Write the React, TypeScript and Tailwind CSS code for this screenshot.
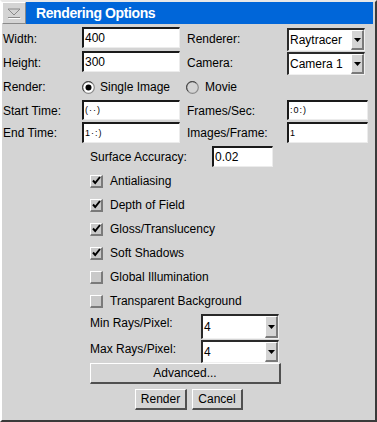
const font = { fontFamily: '"Liberation Sans", Arial, sans-serif' };

const Label = ({ children, className = "" }: { children: React.ReactNode; className?: string }) => (
  <span className={`text-[12px] leading-none text-black whitespace-nowrap ${className}`}>{children}</span>
);

const Field = ({ value, className = "", small = false }: { value: string; className?: string; small?: boolean }) => (
  <div
    className={`flex items-center bg-white border-t-2 border-l-2 border-t-[#1a1a1a] border-l-[#1a1a1a] border-b border-r border-b-[#ececec] border-r-[#ececec] pl-[1px] ${className}`}
  >
    <span className={small ? "text-[9px] leading-none tracking-[1px] text-black" : "text-[12px] leading-none text-black"}>
      {value}
    </span>
  </div>
);

const Arrow = () => (
  <svg width="7" height="4" viewBox="0 0 7 4">
    <path d="M0 0h7L3.5 4z" fill="#000" />
  </svg>
);

const Select = ({ value, className = "" }: { value: string; className?: string }) => (
  <div
    className={`flex bg-white border-t-2 border-l-2 border-t-[#2a2a2a] border-l-[#2a2a2a] border-b border-r border-b-[#f0f0f0] border-r-[#f0f0f0] ${className}`}
  >
    <div className="flex-1 flex items-center pl-[1px]">
      <span className="text-[12px] leading-none text-black">{value}</span>
    </div>
    <div className="w-[13px] flex items-center justify-center bg-[#d4d4d4] border-t border-l border-t-white border-l-white border-b-2 border-r-2 border-b-[#7a7a7a] border-r-[#7a7a7a]">
      <Arrow />
    </div>
  </div>
);

const Radio = ({ checked }: { checked?: boolean }) => (
  <svg width="13" height="13" viewBox="0 0 13 13">
    <circle cx="6.5" cy="6.5" r="5.8" fill={checked ? "#ffffff" : "#d4d4d4"} stroke="#8a8a8a" strokeWidth="1.2" />
    <path d="M2.2 10.3A5.6 5.6 0 0 1 10.3 2.2" fill="none" stroke="#404040" strokeWidth="1" />
    {checked && <circle cx="6.5" cy="6.5" r="3" fill="#000" />}
  </svg>
);

const Check = ({ checked, label }: { checked?: boolean; label: string }) => (
  <div className="h-[24px] flex items-center pl-[88px]">
    <div className="w-[13px] h-[13px] flex items-center justify-center bg-[#c9c9c9] border-t border-l border-t-white border-l-white border-b-2 border-r-2 border-b-[#7a7a7a] border-r-[#7a7a7a]">
      {checked && (
        <svg width="9" height="9" viewBox="0 0 9 9">
          <path d="M1 4.5l2.2 2.5L8 1" fill="none" stroke="#000" strokeWidth="2" />
        </svg>
      )}
    </div>
    <Label className="ml-[7px]">{label}</Label>
  </div>
);

const Button = ({ children, className = "" }: { children: React.ReactNode; className?: string }) => (
  <div
    className={`flex items-center justify-center bg-[#d4d4d4] border-t border-l border-t-white border-l-white border-b-2 border-r-2 border-b-[#505050] border-r-[#505050] ${className}`}
  >
    <Label>{children}</Label>
  </div>
);

export default function App() {
  return (
    <div
      style={font}
      className="w-[377px] h-[422px] bg-[#d4d4d4] border-t-2 border-l-2 border-t-[#e8e8e8] border-l-white border-r-2 border-b-2 border-r-[#3a3a3a] border-b-[#3a3a3a] flex flex-col"
    >
      {/* Title bar */}
      <div className="h-[22px] flex">
        <div className="w-[24px] flex items-center justify-center border-t border-l border-t-white border-l-white border-b border-r border-b-[#8a8a8a] border-r-[#8a8a8a]">
          <svg width="14" height="11" viewBox="0 0 14 11">
            <path d="M1 1h12L7 7z" fill="none" stroke="#8a8a8a" strokeWidth="1" />
            <path d="M1 9.5h12" stroke="#8a8a8a" strokeWidth="1" />
            <path d="M1.5 10.5h12" stroke="#ffffff" strokeWidth="1" />
          </svg>
        </div>
        <div className="w-[347px] bg-[#0066d9] flex items-center pl-[10px]">
          <span className="text-white text-[14px] font-bold leading-none tracking-[-0.4px]">Rendering Options</span>
        </div>
      </div>

      <div className="h-[3px]" />

      {/* Width / Renderer */}
      <div className="h-[24px] flex items-start">
        <div className="w-[80px] h-full flex items-center pl-[1px]">
          <Label>Width:</Label>
        </div>
        <Field value="400" className="w-[98px] h-[21px]" />
        <div className="w-[107px] h-full flex items-center pl-[7px]">
          <Label>Renderer:</Label>
        </div>
        <Select value="Raytracer" className="w-[78px] h-[23px] mt-[1px]" />
      </div>

      {/* Height / Camera */}
      <div className="h-[24px] flex items-start">
        <div className="w-[80px] h-full flex items-center pl-[1px]">
          <Label>Height:</Label>
        </div>
        <Field value="300" className="w-[98px] h-[21px]" />
        <div className="w-[107px] h-full flex items-center pl-[7px]">
          <Label>Camera:</Label>
        </div>
        <Select value="Camera 1" className="w-[78px] h-[23px] mt-[1px]" />
      </div>

      {/* Render mode */}
      <div className="h-[24px] flex items-center">
        <div className="w-[80px] pl-[1px] flex">
          <Label>Render:</Label>
        </div>
        <div className="w-[104px] flex items-center">
          <Radio checked />
          <Label className="ml-[5px]">Single Image</Label>
        </div>
        <div className="flex items-center">
          <Radio />
          <Label className="ml-[6px]">Movie</Label>
        </div>
      </div>

      <div className="h-[1px]" />

      {/* Start time / Frames */}
      <div className="h-[22px] flex items-start">
        <div className="w-[80px] h-[21px] flex items-center pl-[1px]">
          <Label>Start Time:</Label>
        </div>
        <Field value="(··)" small className="w-[98px] h-[20px]" />
        <div className="w-[107px] h-[21px] flex items-center pl-[7px]">
          <Label>Frames/Sec:</Label>
        </div>
        <Field value=":0:)" small className="w-[81px] h-[20px]" />
      </div>

      {/* End time / Images */}
      <div className="h-[22px] flex items-start">
        <div className="w-[80px] h-[21px] flex items-center pl-[1px]">
          <Label>End Time:</Label>
        </div>
        <Field value="1·:)" small className="w-[98px] h-[21px]" />
        <div className="w-[107px] h-[21px] flex items-center pl-[7px]">
          <Label>Images/Frame:</Label>
        </div>
        <Field value="1" small className="w-[81px] h-[21px]" />
      </div>

      <div className="h-[2px]" />

      {/* Surface accuracy */}
      <div className="h-[21px] flex items-center">
        <div className="w-[210px] pl-[88px] flex">
          <Label>Surface Accuracy:</Label>
        </div>
        <Field value="0.02" className="w-[61px] h-[21px]" />
      </div>

      <div className="h-[2px]" />

      <Check checked label="Antialiasing" />
      <Check checked label="Depth of Field" />
      <Check checked label="Gloss/Translucency" />
      <Check checked label="Soft Shadows" />
      <Check label="Global Illumination" />
      <Check label="Transparent Background" />

      <div className="h-[1px]" />

      {/* Min rays */}
      <div className="h-[26px] flex items-start">
        <div className="w-[199px] pl-[88px] pt-[3px] flex">
          <Label>Min Rays/Pixel:</Label>
        </div>
        <Select value="4" className="w-[78px] h-[25px]" />
      </div>

      {/* Max rays */}
      <div className="h-[23px] flex items-start">
        <div className="w-[199px] pl-[88px] pt-[3px] flex">
          <Label>Max Rays/Pixel:</Label>
        </div>
        <Select value="4" className="w-[78px] h-[23px]" />
      </div>

      <div className="flex pl-[88px]">
        <Button className="w-[191px] h-[21px]">Advanced...</Button>
      </div>

      <div className="h-[5px]" />

      <div className="flex pl-[133px] gap-[5px]">
        <Button className="w-[52px] h-[21px]">Render</Button>
        <Button className="w-[51px] h-[21px]">Cancel</Button>
      </div>
    </div>
  );
}
